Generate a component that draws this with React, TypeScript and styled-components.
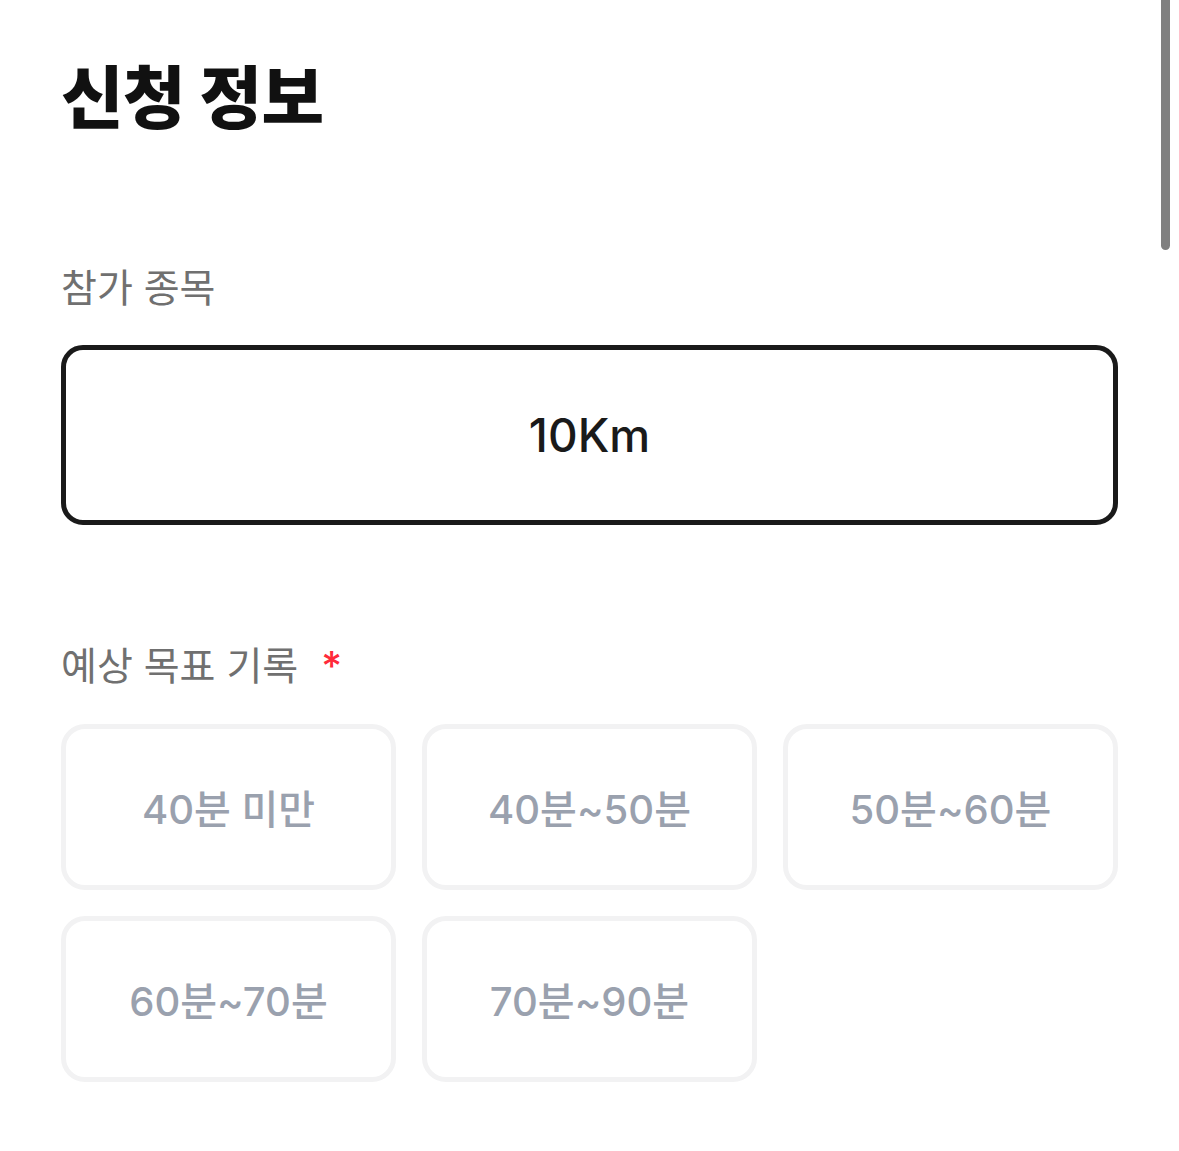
import React, { useState } from 'react'
import styled, { createGlobalStyle } from 'styled-components'

const GlobalStyle = createGlobalStyle`
  html, body {
    margin: 0;
    padding: 0;
    background: #fff;
  }
  body {
    font-family: Inter, "Noto Sans CJK KR", "Noto Sans", sans-serif;
    -webkit-font-smoothing: antialiased;
  }
`

const Page = styled.main`
  position: relative;
  box-sizing: border-box;
  min-height: 1151px;
  padding: 58px 61px 40px;
`

const ScrollThumb = styled.div`
  position: absolute;
  top: 0;
  right: 9px;
  width: 9px;
  height: 250px;
  background: #808080;
  border-radius: 0 0 5px 5px;
`

const Title = styled.h1`
  margin: 0;
  font-size: 68px;
  line-height: 80px;
  font-weight: 800;
  color: #111;
  letter-spacing: -0.5px;
`

const Label = styled.h2<{ $gap: number }>`
  display: flex;
  align-items: center;
  margin: ${p => p.$gap}px 0 0;
  font-size: 39px;
  line-height: 46px;
  font-weight: 400;
  color: #707070;
`

const Required = styled.span`
  margin-left: 23px;
  color: #ff2a3a;
  font-size: 40px;
  font-weight: 500;
  align-self: flex-start;
  line-height: 46px;
`

const EventBox = styled.div`
  box-sizing: border-box;
  display: flex;
  align-items: center;
  justify-content: center;
  margin-top: 34px;
  height: 180px;
  border: 5px solid #1a1a1a;
  border-radius: 22px;
  font-size: 46px;
  font-weight: 500;
  color: #1a1a1a;
`

const Options = styled.div`
  display: grid;
  grid-template-columns: repeat(3, 1fr);
  gap: 26px;
  margin-top: 35px;
`

const Option = styled.button<{ $active: boolean }>`
  box-sizing: border-box;
  height: 166px;
  background: #fff;
  border: 5px solid ${p => (p.$active ? '#1a1a1a' : '#f2f2f3')};
  border-radius: 24px;
  font-family: inherit;
  font-size: 40px;
  font-weight: 500;
  color: ${p => (p.$active ? '#1a1a1a' : '#9aa1ae')};
  cursor: pointer;
  padding: 0;
`

const times = ['40분 미만', '40분~50분', '50분~60분', '60분~70분', '70분~90분']

export default function App() {
  const [picked, setPicked] = useState<string | null>(null)

  return (
    <Page>
      <GlobalStyle />
      <ScrollThumb />
      <Title>신청 정보</Title>
      <Label $gap={127}>참가 종목</Label>
      <EventBox>10Km</EventBox>
      <Label $gap={118}>
        예상 목표 기록<Required>*</Required>
      </Label>
      <Options>
        {times.map(t => (
          <Option key={t} $active={picked === t} onClick={() => setPicked(t)}>
            {t}
          </Option>
        ))}
      </Options>
    </Page>
  )
}
